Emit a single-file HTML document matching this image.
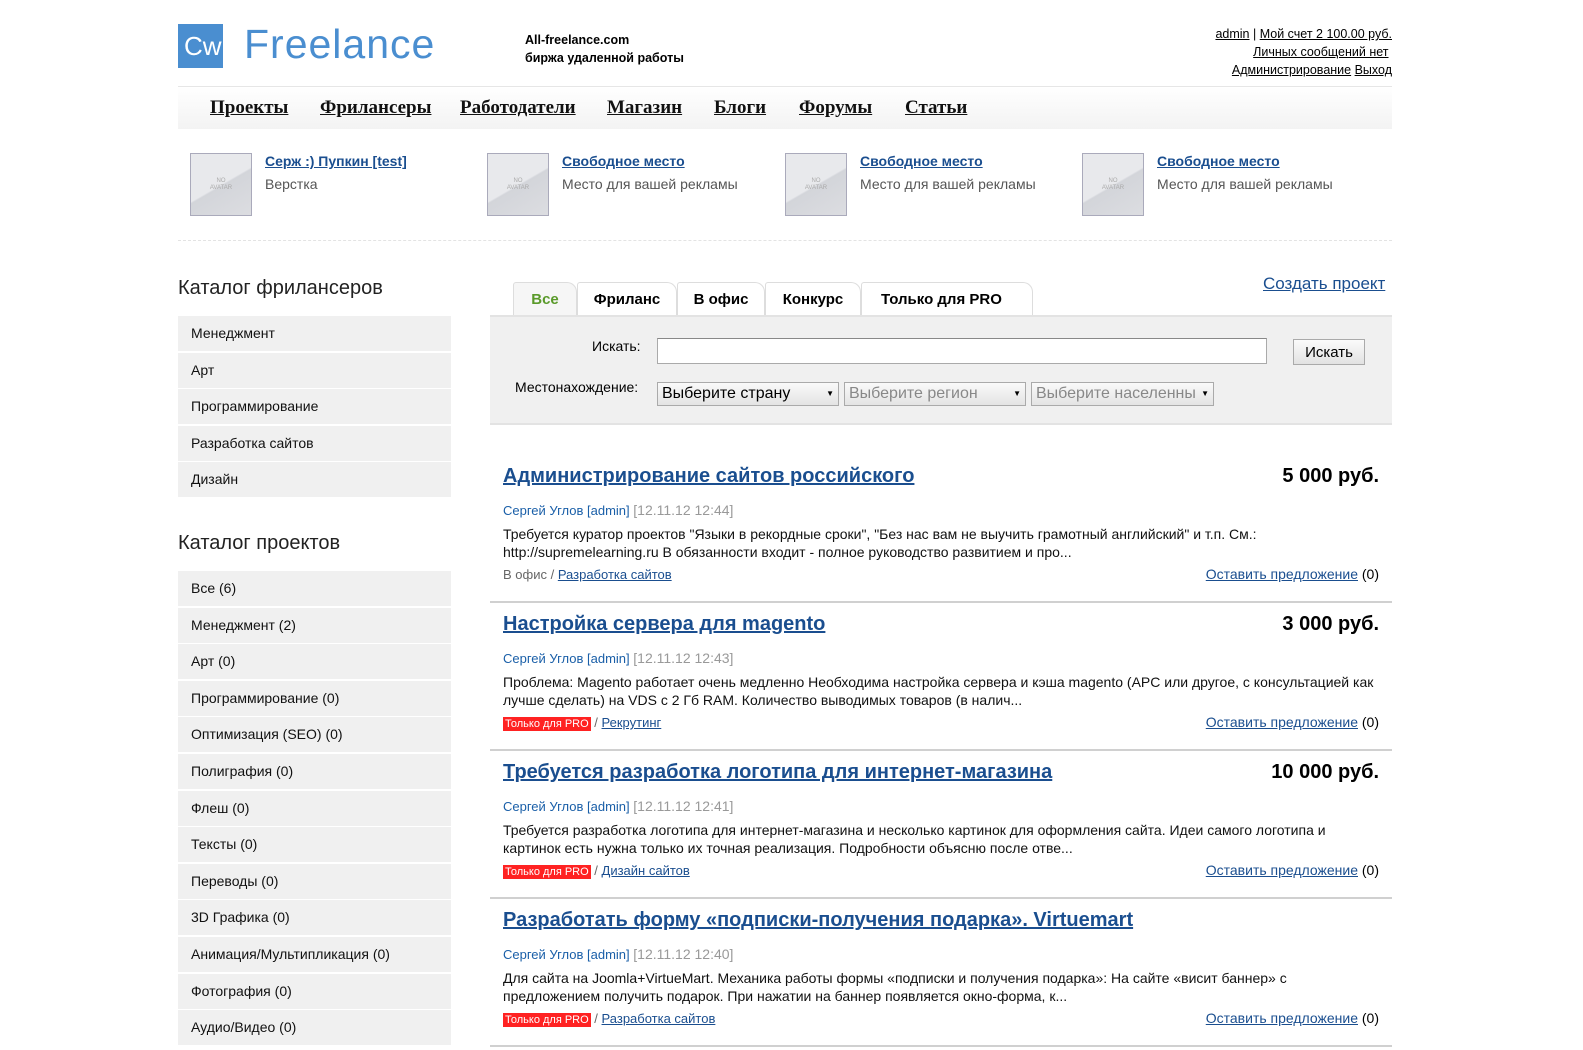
<!DOCTYPE html>
<html><head><meta charset="utf-8"><style>
*{margin:0;padding:0;box-sizing:border-box}
body{width:1583px;height:1050px;overflow:hidden;background:#fff;font-family:"Liberation Sans",sans-serif;color:#000;position:relative}
a{color:#1a4e8f;text-decoration:underline}
.abs{position:absolute}
.nav{position:absolute;left:178px;top:86px;width:1214px;height:43px;border-top:1px solid #e6e6e6;background:linear-gradient(#fff,#f3f3f3)}
.nav a{position:absolute;top:10px;font-family:"Liberation Serif",serif;font-weight:bold;font-size:19px;color:#111}
.ad{position:absolute;top:153px}
.av{position:absolute;left:0;top:0;width:62px;height:63px;border:1px solid #aab;background:linear-gradient(150deg,#e8e9ec 50%,#d3d5da 52%,#dcdde1);font-size:6px;color:#aaa;text-align:center;padding-top:24px;line-height:7px}
.ad a{position:absolute;left:75px;top:0;font-size:14px;font-weight:bold;color:#1a4e8f;white-space:nowrap}
.ad span{position:absolute;left:75px;top:23px;font-size:14px;color:#555;white-space:nowrap}
h2{position:absolute;left:178px;font-size:20px;font-weight:normal;color:#222}
.side{position:absolute;left:178px;width:273px}
.side div{height:35px;background:#f0f0f0;margin-bottom:1.6px;font-size:14px;padding:9px 0 0 13px;color:#111}
.tab{position:absolute;top:282px;height:34px;border:1px solid #ddd;border-bottom:none;background:#fff;font-size:15px;font-weight:bold;padding:8px 0 0;text-align:center;border-radius:3px 10px 0 0}
.filter{position:absolute;left:490px;top:315px;width:902px;height:110px;background:#f0f0f0;border-top:2px solid #e3e3e3;border-bottom:2px solid #e3e3e3}
.sel{position:absolute;top:65px;height:24px;border:1px solid #aaa;background:linear-gradient(#fafafa,#e4e4e4);font-size:16px;padding:2px 4px;white-space:nowrap;overflow:hidden}
.sel:after{content:"▼";position:absolute;right:4px;top:6px;font-size:8px;color:#000}
.pr{position:absolute;left:490px;width:902px;height:148px;border-bottom:2px solid #d0d0d0}
.pr .t{position:absolute;left:13px;top:10px;font-size:20px;font-weight:bold;color:#1a4e8f;white-space:nowrap}
.pr .p{position:absolute;right:13px;top:10px;font-size:20px;font-weight:bold}
.pr .m{position:absolute;left:13px;top:47px;font-size:13px;color:#1a5fa8}
.pr .m span{color:#999;font-size:14px}
.pr .d{position:absolute;left:13px;top:70px;width:880px;font-size:14px;line-height:18px;color:#111}
.pr .c{position:absolute;left:13px;top:112px;font-size:13px;color:#666}
.pr .c b{background:#f22;color:#fff;font-weight:normal;font-size:11px;padding:1px 2px}
.pr .o{position:absolute;right:13px;top:111px;font-size:14px}
</style></head><body>
<div class="abs" style="left:178px;top:24px;width:45px;height:44px;background:#4a8ed0"></div>
<div class="abs" style="left:184px;top:28px;width:33px;height:36px;color:#fff;font-size:26px;line-height:36px;text-align:center">Cw</div>
<div class="abs" style="left:244px;top:21px;font-size:41px;color:#4a8ed0;letter-spacing:1px">Freelance</div>
<div class="abs" style="left:525px;top:31px;font-size:12.5px;font-weight:bold;line-height:18px">All-freelance.com<br>биржа удаленной работы</div>
<div class="abs" style="right:191px;top:25px;font-size:12.5px;line-height:18px;text-align:right;color:#000"><a style="color:#000">admin</a> | <a style="color:#000">Мой счет 2 100.00 руб.</a><br><a style="color:#000">Личных сообщений нет</a>&nbsp;<br><a style="color:#000">Администрирование</a> <a style="color:#000">Выход</a></div>
<div class="nav">
<a style="left:32px">Проекты</a><a style="left:142px">Фрилансеры</a><a style="left:282px">Работодатели</a><a style="left:429px">Магазин</a><a style="left:536px">Блоги</a><a style="left:621px">Форумы</a><a style="left:727px">Статьи</a></div>
<div class="ad" style="left:190px"><div class="av">NO<br>AVATAR</div><a>Серж :) Пупкин [test]</a><span>Верстка</span></div>
<div class="ad" style="left:487px"><div class="av">NO<br>AVATAR</div><a>Свободное место</a><span>Место для вашей рекламы</span></div>
<div class="ad" style="left:785px"><div class="av">NO<br>AVATAR</div><a>Свободное место</a><span>Место для вашей рекламы</span></div>
<div class="ad" style="left:1082px"><div class="av">NO<br>AVATAR</div><a>Свободное место</a><span>Место для вашей рекламы</span></div>
<div class="abs" style="left:178px;top:240px;width:1214px;border-top:1px dashed #e3e3e3"></div>
<h2 style="top:277px">Каталог фрилансеров</h2>
<div class="side" style="top:316px"><div>Менеджмент</div><div>Арт</div><div>Программирование</div><div>Разработка сайтов</div><div>Дизайн</div></div>
<h2 style="top:532px">Каталог проектов</h2>
<div class="side" style="top:571px"><div>Все (6)</div><div>Менеджмент (2)</div><div>Арт (0)</div><div>Программирование (0)</div><div>Оптимизация (SEO) (0)</div><div>Полиграфия (0)</div><div>Флеш (0)</div><div>Тексты (0)</div><div>Переводы (0)</div><div>3D Графика (0)</div><div>Анимация/Мультипликация (0)</div><div>Фотография (0)</div><div>Аудио/Видео (0)</div></div>
<div class="tab" style="left:513px;width:64px;color:#5a9a2a;background:#f6f6f6">Все</div>
<div class="tab" style="left:577px;width:100px">Фриланс</div>
<div class="tab" style="left:677px;width:88px">В офис</div>
<div class="tab" style="left:765px;width:96px">Конкурс</div>
<div class="tab" style="left:861px;width:172px;text-align:left;padding-left:19px">Только для PRO</div>
<a class="abs" style="left:1263px;top:274px;font-size:17px">Создать проект</a>
<div class="filter">
<div class="abs" style="left:102px;top:21px;font-size:14px">Искать:</div>
<div class="abs" style="left:167px;top:21px;width:610px;height:26px;background:#fff;border:1px solid #aaa;border-top-color:#888"></div>
<div class="abs" style="left:803px;top:22px;width:72px;height:26px;border:1px solid #aaa;background:linear-gradient(#fbfbfb,#e2e2e2);font-size:15px;text-align:center;padding-top:4px">Искать</div>
<div class="abs" style="left:25px;top:62px;font-size:14px">Местонахождение:</div>
<div class="sel" style="left:167px;width:182px">Выберите страну</div>
<div class="sel" style="left:354px;width:182px;color:#888">Выберите регион</div>
<div class="sel" style="left:541px;width:183px;color:#888">Выберите населенны</div>
</div>
<div class="pr" style="top:455px"><a class="t">Администрирование сайтов российского</a><div class="p">5 000 руб.</div><div class="m">Сергей Углов [admin] <span>[12.11.12 12:44]</span></div><div class="d">Требуется куратор проектов "Языки в рекордные сроки", "Без нас вам не выучить грамотный английский" и т.п. См.: http://supremelearning.ru В обязанности входит - полное руководство развитием и про...</div><div class="c">В офис / <a>Разработка сайтов</a></div><div class="o"><a>Оставить предложение</a> (0)</div></div>
<div class="pr" style="top:603px"><a class="t">Настройка сервера для magento</a><div class="p">3 000 руб.</div><div class="m">Сергей Углов [admin] <span>[12.11.12 12:43]</span></div><div class="d">Проблема: Magento работает очень медленно Необходима настройка сервера и кэша magento (APC или другое, с консультацией как лучше сделать) на VDS с 2 Гб RAM. Количество выводимых товаров (в налич...</div><div class="c"><b>Только для PRO</b> / <a>Рекрутинг</a></div><div class="o"><a>Оставить предложение</a> (0)</div></div>
<div class="pr" style="top:751px"><a class="t">Требуется разработка логотипа для интернет-магазина</a><div class="p">10 000 руб.</div><div class="m">Сергей Углов [admin] <span>[12.11.12 12:41]</span></div><div class="d">Требуется разработка логотипа для интернет-магазина и несколько картинок для оформления сайта. Идеи самого логотипа и картинок есть нужна только их точная реализация. Подробности объясню после отве...</div><div class="c"><b>Только для PRO</b> / <a>Дизайн сайтов</a></div><div class="o"><a>Оставить предложение</a> (0)</div></div>
<div class="pr" style="top:899px"><a class="t">Разработать форму «подписки-получения подарка». Virtuemart</a><div class="m">Сергей Углов [admin] <span>[12.11.12 12:40]</span></div><div class="d">Для сайта на Joomla+VirtueMart. Механика работы формы «подписки и получения подарка»: На сайте «висит баннер» с предложением получить подарок. При нажатии на баннер появляется окно-форма, к...</div><div class="c"><b>Только для PRO</b> / <a>Разработка сайтов</a></div><div class="o"><a>Оставить предложение</a> (0)</div></div>
</body></html>
